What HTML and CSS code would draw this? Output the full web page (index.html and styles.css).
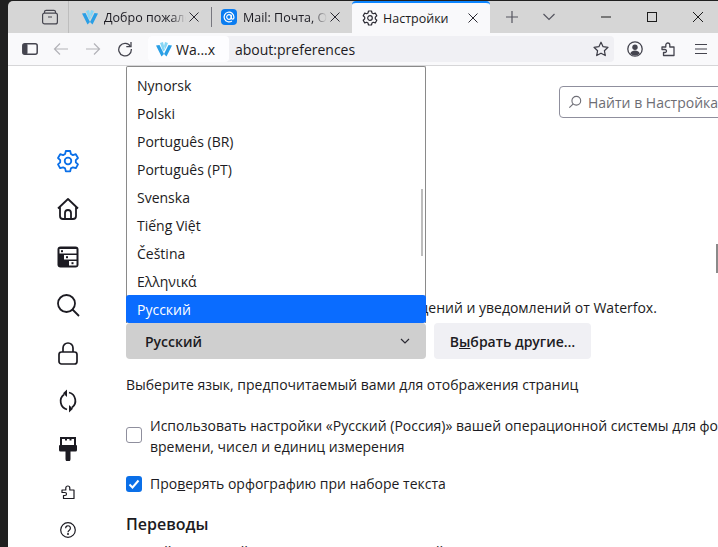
FILE: index.html
```html
<!DOCTYPE html>
<html lang="ru">
<head>
<meta charset="utf-8">
<title>Настройки</title>
<link rel="stylesheet" href="styles.css">
</head>
<body>
<div class="strip"></div>
<div class="window">
  <header class="tabbar">
    <div class="tab-tools">
      <svg class="ico" viewBox="0 0 16 16" width="16" height="16" fill="none" stroke="#45454f" stroke-width="1.200"><rect x="0.600" y="4.100" width="14.800" height="10.800" rx="2"/><path d="M2.500 4V2.800a1.600 1.600 0 0 1 1.600-1.500h7.800a1.600 1.600 0 0 1 1.600 1.500V4M6 8h4"/></svg>
    </div>
    <div class="tab">
      <svg class="wf" viewBox="0 0 16 16" width="16" height="16"><path d="M0 4.500l3.500-.5L8 13l-2.500 2.500z" fill="#2a9fe6"/><path d="M16 4.500l-3.500-.5L8 13l2.500 2.500z" fill="#2a9fe6"/><path d="M4 2l3-1 2 8-2 1.500zM12 2L9 1 8 5l1.500 3z" fill="#86d6f5"/></svg>
      <span class="tab-label fade">Добро пожало</span>
      <svg class="close" viewBox="0 0 10 10" width="10" height="10" fill="none" stroke="#2b2a33"><path d="M.5.500l9 9M9.500.500l-9 9"/></svg>
    </div>
    <div class="tab-sep"></div>
    <div class="tab tab-mail">
      <svg viewBox="0 0 16 16" width="16" height="16"><rect width="16" height="16" rx="4" fill="#0a7cf0"/><circle cx="8" cy="8" r="2.300" fill="none" stroke="#fff" stroke-width="1.200"/><path d="M10.300 5.700v3.100a1.300 1.300 0 0 0 2.600 0V8a4.900 4.900 0 1 0-2 4" fill="none" stroke="#fff" stroke-width="1.200"/></svg>
      <span class="tab-label fade">Mail: Почта, Об</span>
      <svg class="close" viewBox="0 0 10 10" width="10" height="10" fill="none" stroke="#2b2a33"><path d="M.5.500l9 9M9.500.500l-9 9"/></svg>
    </div>
    <div class="tab tab-active">
      <svg viewBox="0 0 16 16" width="16" height="16" fill="none" stroke="#2b2a33" stroke-width="1.200"><path d="M6.500 1h3l.5 2 1.300.7 2-.6 1.500 2.600-1.500 1.400v1.800l1.500 1.400-1.500 2.600-2-.6-1.300.7-.5 2h-3l-.5-2-1.300-.7-2 .6-1.500-2.600 1.500-1.400V7.100L1.200 5.700l1.500-2.600 2 .6L6 3z" stroke-linejoin="round"/><circle cx="8" cy="8" r="2.300"/></svg>
      <span class="tab-label">Настройки</span>
      <svg class="close" viewBox="0 0 10 10" width="10" height="10" fill="none" stroke="#2b2a33"><path d="M.5.500l9 9M9.500.500l-9 9"/></svg>
    </div>
    <div class="tab-new">
      <svg viewBox="0 0 14 14" width="14" height="14" fill="none" stroke="#55555f" stroke-width="1.200"><path d="M7 1v12M1 7h12"/></svg>
      <svg viewBox="0 0 14 8" width="14" height="8" fill="none" stroke="#55555f" stroke-width="1.200"><path d="M1.500 1l5.500 5.500L12.500 1"/></svg>
    </div>
    <div class="win-controls">
      <svg viewBox="0 0 12 12" width="12" height="12" stroke="#1c1c1c" fill="none"><path d="M1 6h10"/></svg>
      <svg viewBox="0 0 12 12" width="12" height="12" stroke="#1c1c1c" fill="none" stroke-width="1"><rect x="1.500" y="1.500" width="9" height="9"/></svg>
      <svg viewBox="0 0 12 12" width="12" height="12" stroke="#1c1c1c" fill="none"><path d="M1 1l10 10M11 1L1 11"/></svg>
    </div>
  </header>
  <nav class="toolbar">
    <svg class="sidebar-ico" viewBox="0 0 16 16" width="16" height="16"><rect x="0.800" y="2.800" width="14.400" height="10.400" rx="2" fill="none" stroke="#45454f" stroke-width="1.500"/><rect x="1" y="3" width="4.500" height="10" rx="1" fill="#45454f"/></svg>
    <svg class="nav-ico" viewBox="0 0 16 16" width="16" height="16" fill="none" stroke="#b3b3b8" stroke-width="1.200"><path d="M15 8H1.500M7 2.500L1.500 8 7 13.500"/></svg>
    <svg class="nav-ico" viewBox="0 0 16 16" width="16" height="16" fill="none" stroke="#b3b3b8" stroke-width="1.200"><path d="M1 8h13.500M9 2.500L14.500 8 9 13.500"/></svg>
    <svg class="nav-ico" viewBox="0 0 16 16" width="16" height="16" fill="none" stroke="#45454f" stroke-width="1.300"><path d="M13.500 5.500A6.300 6.300 0 1 0 14.300 8"/><path d="M14 1v4.700H9.300"/></svg>
    <div class="urlbar">
      <div class="identity">
        <svg viewBox="0 0 16 16" width="16" height="16"><path d="M0 4.500l3.500-.5L8 13l-2.500 2.500z" fill="#2a9fe6"/><path d="M16 4.500l-3.500-.5L8 13l2.500 2.500z" fill="#2a9fe6"/><path d="M4 2l3-1 2 8-2 1.500zM12 2L9 1 8 5l1.500 3z" fill="#86d6f5"/></svg>
        <span>Wa...x</span>
      </div>
      <span class="url">about:preferences</span>
      <svg class="star" viewBox="0 0 16 16" width="16" height="16" fill="none" stroke="#3a3a44" stroke-width="1.200"><path d="M8 1.200l2.100 4.500 4.900.6-3.600 3.400.9 4.900L8 12.200l-4.300 2.400.9-4.900L1 6.300l4.900-.6z" stroke-linejoin="round"/></svg>
    </div>
    <div class="tool-right">
      <svg viewBox="0 0 16 16" width="16" height="16"><circle cx="8" cy="8" r="7.200" fill="none" stroke="#45454f" stroke-width="1.300"/><circle cx="8" cy="6.300" r="2.700" fill="#45454f"/><path d="M3.200 12.500c1-2.300 2.700-3 4.800-3s3.800.7 4.800 3A6.500 6.500 0 0 1 3.200 12.500z" fill="#45454f"/></svg>
      <svg viewBox="0 0 16 16" width="16" height="16" fill="none" stroke="#45454f" stroke-width="1.300"><path d="M2 6h3.800V4a2 2 0 0 1 4 0v2H14v8.500H3.500V11.500H5a1.500 1.500 0 0 0 0-3H2z" stroke-linejoin="round"/></svg>
      <svg viewBox="0 0 16 16" width="16" height="16" fill="none" stroke="#45454f" stroke-width="1.200"><path d="M2 3.500h12M2 8h12M2 12.500h12"/></svg>
    </div>
  </nav>
  <div class="page">
    <aside class="sidebar">
      <svg viewBox="0 0 24 24" width="24" height="24" fill="none" stroke="#0a6fe8" stroke-width="1.800"><path d="M9.800 2h4.400l.7 3 2 1.100 2.900-.9 2.200 3.800-2.200 2.100v2.200l2.200 2.100-2.200 3.800-2.900-.9-2 1.100-.7 3H9.800l-.7-3-2-1.100-2.900.9L2 15.400l2.200-2.100v-2.200L2 9l2.200-3.800 2.900.9 2-1.100z" stroke-linejoin="round"/><circle cx="12" cy="12" r="3.300"/></svg>
      <svg viewBox="0 0 24 24" width="24" height="24" fill="none" stroke="#1c1b22" stroke-width="1.800"><path d="M2 11.500L12 2l10 9.500M4 9.500V19a3 3 0 0 0 3 3h10a3 3 0 0 0 3-3V9.500M9 22v-6a3 3 0 0 1 6 0v6" stroke-linejoin="round"/></svg>
      <svg viewBox="0 0 24 24" width="24" height="24"><rect x="1.500" y="1.500" width="21" height="21" rx="3" fill="#1c1b22"/><rect x="3.500" y="4" width="17" height="4.500" fill="#fff"/><rect x="8" y="10" width="12.500" height="4.500" fill="#fff"/><rect x="13" y="16" width="7.500" height="4.500" fill="#fff"/><rect x="5" y="5.200" width="2" height="2" fill="#1c1b22"/><rect x="10" y="11.200" width="2" height="2" fill="#1c1b22"/><rect x="15.500" y="17.200" width="2" height="2" fill="#1c1b22"/></svg>
      <svg viewBox="0 0 24 24" width="24" height="24" fill="none" stroke="#1c1b22" stroke-width="1.800"><circle cx="10.500" cy="10.500" r="8.500"/><path d="M16.500 16.500L23 23"/></svg>
      <svg viewBox="0 0 24 24" width="24" height="24" fill="none" stroke="#1c1b22" stroke-width="1.700"><rect x="3" y="11" width="18" height="12" rx="2.500"/><path d="M7 11V7a5 5 0 0 1 10 0v4"/></svg>
      <svg viewBox="0 0 24 24" width="24" height="24" fill="none" stroke="#1c1b22" stroke-width="1.800"><path d="M8 5.500A8.500 8.500 0 0 0 11 20.500M16 18.500A8.500 8.500 0 0 0 13 3.500"/><path d="M11 0.500V8L7 4.200zM13 23.500V16l4 3.800z" fill="#1c1b22" stroke="none"/></svg>
      <svg viewBox="0 0 24 24" width="24" height="24"><path d="M4 0h16v8h0a1 1 0 0 1 1 1v4a1.500 1.500 0 0 1-1.500 1.500H14.500v7.500a2.500 2.500 0 0 1-5 0V14.500H4.500A1.500 1.500 0 0 1 3 13V9a1 1 0 0 1 1-1z" fill="#1c1b22"/><path d="M6 2h3v1.500h2V2h2.500v1.500H15.500V2H18v6H6z" fill="#fff"/></svg>
      <svg class="small" viewBox="0 0 16 16" width="16" height="16" fill="none" stroke="#1c1b22" stroke-width="1.200"><path d="M2 6h3.800V4a2 2 0 0 1 4 0v2H14v8.500H3.500V11.500H5a1.500 1.500 0 0 0 0-3H2z" stroke-linejoin="round"/></svg>
      <svg class="small" viewBox="0 0 16 16" width="16" height="16" fill="none" stroke="#1c1b22" stroke-width="1.200"><circle cx="8" cy="8" r="7.300"/><path d="M5.600 6.200a2.400 2.400 0 1 1 3.700 2c-.9.600-1.300 1-1.300 2"/><circle cx="8" cy="12" r=".4" fill="#1c1b22"/></svg>
    </aside>
    <main class="content">
      <div class="search-row">
        <div class="search">
          <svg viewBox="0 0 16 16" width="14" height="14" fill="none" stroke="#6f6f77" stroke-width="1.300"><circle cx="9.500" cy="6.500" r="5"/><path d="M6 10.200L1.500 14.500"/></svg>
          <span>Найти в Настройках</span>
        </div>
      </div>
      <p class="notice">Выберите языки отображения меню, сообщений и уведомлений от Waterfox.</p>
      <div class="lang-row">
        <div class="select"><span>Русский</span><svg viewBox="0 0 10 6" width="10" height="6" fill="none" stroke="#2b2a33" stroke-width="1.200"><path d="M1 1l4 4 4-4"/></svg></div>
        <button class="btn">В<u>ы</u>брать другие…</button>
      </div>
      <p class="hint">Выберите язык, предпочитаемый вами для отображения страниц</p>
      <div class="check-row check-top">
        <span class="box"></span>
        <span class="check-text">Использовать настройки «Русский (Россия)» вашей операционной системы для форматирования даты,<br>времени, чисел и единиц измерения</span>
      </div>
      <div class="check-row check-spell">
        <span class="box box-on"><svg viewBox="0 0 16 16" width="16" height="16" fill="none" stroke="#fff" stroke-width="2"><path d="M3.500 8.500l3 3 6-7"/></svg></span>
        <span>Про<u>в</u>ерять орфографию при наборе текста</span>
      </div>
      <h2 class="section">Переводы</h2>
      <p class="last">Вашей страницей можно управлять в настройке перевода</p>
      <div class="page-scroll"></div>
    </main>
    <div class="dropdown">
      <ul class="options">
        <li>Nynorsk</li>
        <li>Polski</li>
        <li>Português (BR)</li>
        <li>Português (PT)</li>
        <li>Svenska</li>
        <li>Tiếng Việt</li>
        <li>Čeština</li>
        <li>Ελληνικά</li>
        <li class="selected">Русский</li>
      </ul>
      <div class="thumb"></div>
    </div>
  </div>
</div>
</body>
</html>
```
FILE: styles.css
```css
* { box-sizing: border-box; }
html, body { margin: 0; height: 547px; overflow: hidden; }
body { display: flex; background: #202020; font-family: "Open Sans", "Noto Sans", sans-serif; color: #1c1b22; }
.strip { width: 8px; flex: none; background: #202020; }
.window { flex: 1; min-width: 0; display: flex; flex-direction: column; padding-top: 1px; }
.tabbar { height: 32px; background: #d6d6d6; display: flex; align-items: center; flex: none; font-size: 12.500px; border-top-left-radius: 5px; }
.tab-tools { width: 61px; height: 100%; display: flex; align-items: center; border-right: 1px solid #bdbdbd; padding-left: 34px; }
.ico { flex: none; }
.tab { display: flex; align-items: center; gap: 6px; height: 100%; padding: 0 12px 0 13px; width: 142px; }
.tab-mail { padding-left: 9px; width: 140px; }
.tab-sep { width: 1px; height: 20px; background: #77777f; }
.tab-label { flex: 1; white-space: nowrap; overflow: hidden; color: #1c1b22; }
.fade { -webkit-mask-image: linear-gradient(to right, #000 82%, transparent); mask-image: linear-gradient(to right, #000 82%, transparent); }
.close { flex: none; margin-left: -3px; }
.tab-active { background: #f9f9fb; width: 138px; padding: 0 12px 0 10px; gap: 5px; border-top: 2px solid #0a84ff; border-radius: 4px 4px 0 0; }
.tab-new { display: flex; align-items: center; gap: 23px; padding-left: 15px; }
.win-controls { margin-left: auto; display: flex; align-items: center; gap: 34px; padding-right: 14px; }
.toolbar { height: 33px; flex: none; background: #f9f9fb; display: flex; align-items: center; border-bottom: 1px solid #d6d6d8; padding-left: 14px; }
.sidebar-ico { margin-right: 15px; }
.nav-ico { margin-right: 16px; }
.urlbar { width: 466px; height: 26px; margin-left: -1px; background: #f0f0f4; border-radius: 4px; display: flex; align-items: center; font-size: 14px; color: #1c1b22; }
.identity { width: 81px; height: 100%; margin-right: 6px; background: #fdfdff; border-radius: 4px; display: flex; align-items: center; gap: 4px; padding-left: 8px; }
.url { flex: 1; }
.star { margin-right: 5px; }
.tool-right { display: flex; align-items: center; gap: 17px; margin-left: 13px; }
.page { position: relative; flex: 1; min-height: 0; display: flex; background: #fff; }
.sidebar { width: 118px; flex: none; display: flex; flex-direction: column; align-items: center; padding-top: 83px; padding-left: 2px; gap: 24px; }
.sidebar svg { flex: none; }
.sidebar .small { margin: -1px 0; }
.content { flex: 1; min-width: 0; position: relative; font-size: 14px; overflow: hidden; }
.search-row { padding: 20px 0 0 433px; height: 52px; }
.search { width: 200px; height: 32px; border: 1px solid #8f8f9d; border-radius: 4px; display: flex; align-items: center; gap: 6px; padding-left: 8px; color: #6d6d74; white-space: nowrap; }
.notice { margin: 180px 0 0; white-space: nowrap; height: 20px; line-height: 20px; }
.lang-row { display: flex; gap: 8px; margin-top: 5px; }
.select { width: 300px; height: 36px; background: #cfcfcf; border-radius: 4px; display: flex; align-items: center; justify-content: space-between; padding: 0 16px 0 19px; font-weight: 600; }
.btn { height: 36px; width: 157px; border: 0; background: #f0f0f4; border-radius: 4px; font: 600 14px "Open Sans", "Noto Sans", sans-serif; color: #1c1b22; padding: 0; }
.hint { margin: 16px 0 0; line-height: 20px; }
.check-row { display: flex; gap: 8px; align-items: flex-start; line-height: 21px; white-space: nowrap; }
.check-top { margin-top: 20px; }
.check-spell { margin-top: 16px; align-items: center; }
.box { width: 16px; height: 16px; flex: none; border: 1px solid #8f8f9d; border-radius: 3px; margin-top: 12px; background: #fff; }
.box-on { background: #0a6fe8; border: 0; margin-top: 0; display: block; }
.box-on svg { display: block; }
.section { margin: 19px 0 0; font-size: 16px; font-weight: 600; line-height: 22px; }
.last { margin: 7px 0 0; white-space: nowrap; line-height: 20px; }
.page-scroll { position: absolute; right: 0; top: 178px; width: 2px; height: 29px; background: #8a8a8a; }
.dropdown { position: absolute; left: 118px; top: 0; width: 300px; height: 257px; background: #fff; border: 1px solid #8a8a8a; border-bottom: 0; border-radius: 2px 2px 0 0; }
.options { list-style: none; margin: 0; padding: 4px 0 0; font-size: 14px; }
.options li { height: 28px; padding: 1px 0 0 10px; line-height: 28px; white-space: nowrap; }
.options .selected { background: #0a6cff; color: #fff; border-radius: 3px; margin: 0 -1px; padding-left: 11px; }
.thumb { position: absolute; right: 2px; top: 122px; width: 2px; height: 67px; background: #bdbdbd; }
```
